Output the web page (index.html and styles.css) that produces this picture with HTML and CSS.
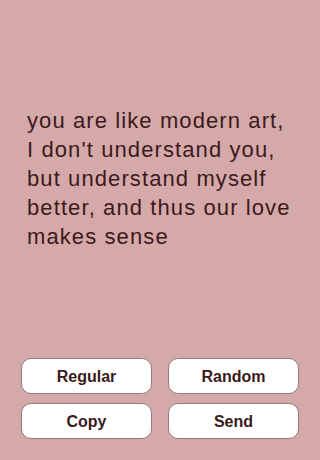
FILE: index.html
```html
<!DOCTYPE html>
<html lang="en">
<head>
    <meta charset="UTF-8">
    <meta name="viewport" content="width=device-width, initial-scale=1.0">
    <title>Love Lines</title>
    <link rel="stylesheet" href="styles.css">
</head>
<body>
    <div class="screen">
        <div class="quote-area">
            <p class="quote" id="quote">you are like modern art,<br>I don't understand you,<br>but understand myself<br>better, and thus our love<br>makes sense</p>
        </div>

        <div class="controls">
            <button class="btn">Regular</button>
            <button class="btn">Random</button>
            <button class="btn">Copy</button>
            <button class="btn">Send</button>
        </div>
    </div>
</body>
</html>
```

FILE: styles.css
```css
* {
    margin: 0;
    padding: 0;
    box-sizing: border-box;
    font-family: 'Liberation Sans', Arial, sans-serif;
}

body {
    background: #d5a9a9;
    width: 320px;
    height: 460px;
    overflow: hidden;
}

.screen {
    display: flex;
    flex-direction: column;
    height: 460px;
}

.quote-area {
    flex: 1;
    display: flex;
    align-items: center;
    padding: 0 0 2px 27px;
}

.quote {
    color: #3b1a1c;
    font-size: 22px;
    line-height: 29px;
    letter-spacing: 1.1px;
    white-space: nowrap;
}

.controls {
    display: grid;
    grid-template-columns: 131px 131px;
    justify-content: space-between;
    row-gap: 9px;
    padding: 0 21px 21px 21px;
}

.btn {
    height: 36px;
    padding-top: 2px;
    border: 1px solid #8f7d7e;
    border-radius: 10px;
    background: #ffffff;
    color: #3b1a1c;
    font-size: 16px;
    font-weight: bold;
    cursor: pointer;
}
```
